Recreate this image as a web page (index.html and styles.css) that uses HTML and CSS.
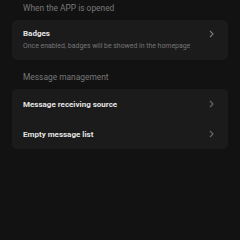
FILE: index.html
```html
<!DOCTYPE html>
<html>
<head>
<meta charset="utf-8">
<link rel="stylesheet" href="styles.css">
</head>
<body>
<main class="page">
  <div class="group-title">When the APP is opened</div>
  <section class="card">
    <div class="item item-two">
      <div class="item-text">
        <div class="item-title">Badges</div>
        <div class="item-sub">Once enabled, badges will be showed in the homepage</div>
      </div>
      <svg class="chev" width="5" height="8" viewBox="0 0 5 8"><path d="M1 1 L4 4 L1 7" fill="none" stroke="#7a7a7a" stroke-width="1.1"/></svg>
    </div>
  </section>
  <div class="group-title">Message management</div>
  <section class="card">
    <div class="item">
      <div class="item-title">Message receiving source</div>
      <svg class="chev" width="5" height="8" viewBox="0 0 5 8"><path d="M1 1 L4 4 L1 7" fill="none" stroke="#6a6a6a" stroke-width="1.1"/></svg>
    </div>
    <div class="item">
      <div class="item-title">Empty message list</div>
      <svg class="chev" width="5" height="8" viewBox="0 0 5 8"><path d="M1 1 L4 4 L1 7" fill="none" stroke="#6a6a6a" stroke-width="1.1"/></svg>
    </div>
  </section>
</main>
</body>
</html>
```
FILE: styles.css
```css
html, body {
  margin: 0;
  padding: 0;
  background: #121212;
  width: 240px;
  height: 240px;
  overflow: hidden;
}
body {
  font-family: Roboto, "Liberation Sans", sans-serif;
}
.page {
  margin-top: -9px;
  padding: 0 12px;
}
.group-title {
  height: 29px;
  box-sizing: border-box;
  display: flex;
  align-items: flex-end;
  padding: 0 11px 5px;
  font-size: 8.4px;
  line-height: 14px;
  color: #787878;
}
.card {
  background: #1b1b1b;
  border-radius: 5px;
}
.item {
  height: 30px;
  display: flex;
  align-items: center;
  justify-content: space-between;
  padding: 0 14px 0 11px;
}
.item-two {
  height: 40px;
  align-items: flex-start;
  padding-top: 8px;
  box-sizing: border-box;
}
.item-two .chev {
  margin-top: 2px;
}
.item-title {
  font-size: 8px;
  font-weight: 700;
  line-height: 11px;
  color: #e4e4e4;
}
.item-sub {
  margin-top: 2px;
  font-size: 6.9px;
  line-height: 10px;
  color: #767676;
}
.chev {
  display: block;
  flex: none;
}
```
